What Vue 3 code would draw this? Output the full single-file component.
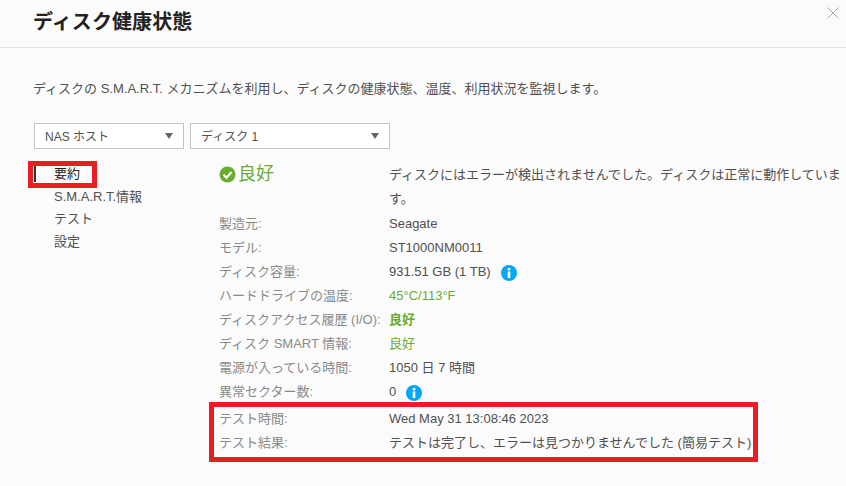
<script setup>
const navItems = ['要約', 'S.M.A.R.T.情報', 'テスト', '設定']

const rows = [
  { label: '製造元:', value: 'Seagate' },
  { label: 'モデル:', value: 'ST1000NM0011' },
  { label: 'ディスク容量:', value: '931.51 GB (1 TB)', info: true },
  { label: 'ハードドライブの温度:', value: '45°C/113°F', kind: 'good' },
  { label: 'ディスクアクセス履歴 (I/O):', value: '良好', kind: 'good strong' },
  { label: 'ディスク SMART 情報:', value: '良好', kind: 'good' },
  { label: '電源が入っている時間:', value: '1050 日 7 時間' },
  { label: '異常セクター数:', value: '0', info: true }
]

const testRows = [
  { label: 'テスト時間:', value: 'Wed May 31 13:08:46 2023' },
  { label: 'テスト結果:', value: 'テストは完了し、エラーは見つかりませんでした (簡易テスト)' }
]
</script>

<template>
  <div class="dialog">
    <header class="head">
      <h1>ディスク健康状態</h1>
      <svg class="close" width="12" height="12" viewBox="0 0 12 12">
        <path d="M.5.5l11 11M11.500.5l-11 11" stroke="#a8a8a8" fill="none" />
      </svg>
    </header>

    <p class="desc">ディスクの S.M.A.R.T. メカニズムを利用し、ディスクの健康状態、温度、利用状況を監視します。</p>

    <div class="selects">
      <div class="select host"><span>NAS ホスト</span><i class="caret"></i></div>
      <div class="select disk"><span>ディスク 1</span><i class="caret"></i></div>
    </div>

    <div class="main">
      <ul class="nav">
        <li v-for="(item, i) in navItems" :key="item" :class="{ active: i === 0 }">{{ item }}</li>
      </ul>

      <div class="content">
        <div class="status">
          <div class="status-left">
            <svg width="17" height="17" viewBox="0 0 17 17">
              <circle cx="8.500" cy="8.500" r="8" fill="#6aad2f" />
              <path d="M4.500 8.700l3 3 5-5.600" stroke="#fff" stroke-width="2.200" fill="none" />
            </svg>
            <span>良好</span>
          </div>
          <p>ディスクにはエラーが検出されませんでした。ディスクは正常に動作しています。</p>
        </div>

        <div v-for="row in rows" :key="row.label" class="row">
          <span class="label">{{ row.label }}</span>
          <span class="value" :class="row.kind">{{ row.value }}</span>
          <svg v-if="row.info" class="info" width="16" height="16" viewBox="0 0 16 16">
            <circle cx="8" cy="8" r="8" fill="#00a8f5" />
            <rect x="6.700" y="3" width="2.600" height="2.400" fill="#fff" />
            <rect x="6.700" y="6.500" width="2.600" height="6.500" fill="#fff" />
          </svg>
        </div>

        <div class="tests">
          <div v-for="row in testRows" :key="row.label" class="row">
            <span class="label">{{ row.label }}</span>
            <span class="value">{{ row.value }}</span>
          </div>
        </div>
      </div>
    </div>

    <!-- annotation boxes on top of the screenshot -->
    <div class="mark mark-nav"></div>
    <div class="mark mark-test"></div>
  </div>
</template>

<style>
html,
body {
  margin: 0;
  background: #fbfbfb;
}
</style>

<style scoped>
.dialog {
  position: relative;
  width: 846px;
  height: 486px;
  overflow: hidden;
  background: #fbfbfb;
  color: #505050;
  font-family: "Liberation Sans", "Noto Sans CJK JP", sans-serif;
  font-size: 13px;
}

.head {
  height: 47px;
  border-bottom: 1px solid #e2e2e2;
  position: relative;
}

.head h1 {
  margin: 0;
  padding: 8px 0 0 33px;
  font-size: 20px;
  line-height: 29px;
  font-weight: 700;
  letter-spacing: 0.100px;
  color: #222;
}

.close {
  position: absolute;
  top: 7px;
  right: 7px;
}

.desc {
  margin: 0;
  padding: 32px 0 0 33px;
  line-height: 18px;
  white-space: nowrap;
}

.selects {
  display: flex;
  gap: 6px;
  padding: 25px 0 0 34px;
}

.select {
  box-sizing: border-box;
  height: 26px;
  display: flex;
  align-items: center;
  justify-content: space-between;
  padding: 0 10px;
  border: 1px solid #c4c4c4;
  background: #fff;
  font-size: 12px;
}

.select span {
  margin-top: -2px;
}

.host {
  width: 150px;
}

.disk {
  width: 200px;
}

.caret {
  width: 0;
  height: 0;
  border-left: 4px solid transparent;
  border-right: 4px solid transparent;
  border-top: 6px solid #666;
}

.main {
  display: flex;
  padding: 14px 0 0 34px;
}

.nav {
  width: 185px;
  margin: 0;
  padding: 0;
  list-style: none;
}

.nav li {
  height: 22.500px;
  line-height: 22px;
  padding-left: 20px;
  white-space: nowrap;
}

.nav li.active {
  color: #222;
  position: relative;
}

.nav li.active::before {
  content: '';
  position: absolute;
  left: 0;
  top: 3px;
  width: 2px;
  height: 16px;
  background: #333;
}

.content {
  flex: 1;
  min-width: 0;
}

.status {
  display: flex;
  height: 49px;
}

.status-left {
  width: 170px;
  flex: none;
  display: flex;
  align-items: flex-start;
  gap: 2px;
  color: #6aad2f;
  font-size: 18px;
  line-height: 22px;
}

.status-left svg {
  margin-top: 3px;
}

.status p {
  margin: 0;
  width: 457px;
  line-height: 24px;
  flex: none;
}

.row {
  display: flex;
  align-items: center;
  height: 24px;
  line-height: 22px;
}

.label {
  width: 170px;
  flex: none;
  color: #8a8a8a;
  white-space: nowrap;
}

.value {
  white-space: nowrap;
}

.good {
  color: #6aad2f;
}

.strong {
  font-weight: 700;
}

.info {
  margin: 1px 0 0 10px;
}

.tests {
  margin-top: 3px;
}

.mark {
  position: absolute;
  box-sizing: border-box;
  border: 5px solid #ed1c24;
  pointer-events: none;
}

.mark-nav {
  left: 28px;
  top: 161px;
  width: 69px;
  height: 27px;
}

.mark-test {
  left: 209px;
  top: 402px;
  width: 549px;
  height: 60px;
}
</style>
